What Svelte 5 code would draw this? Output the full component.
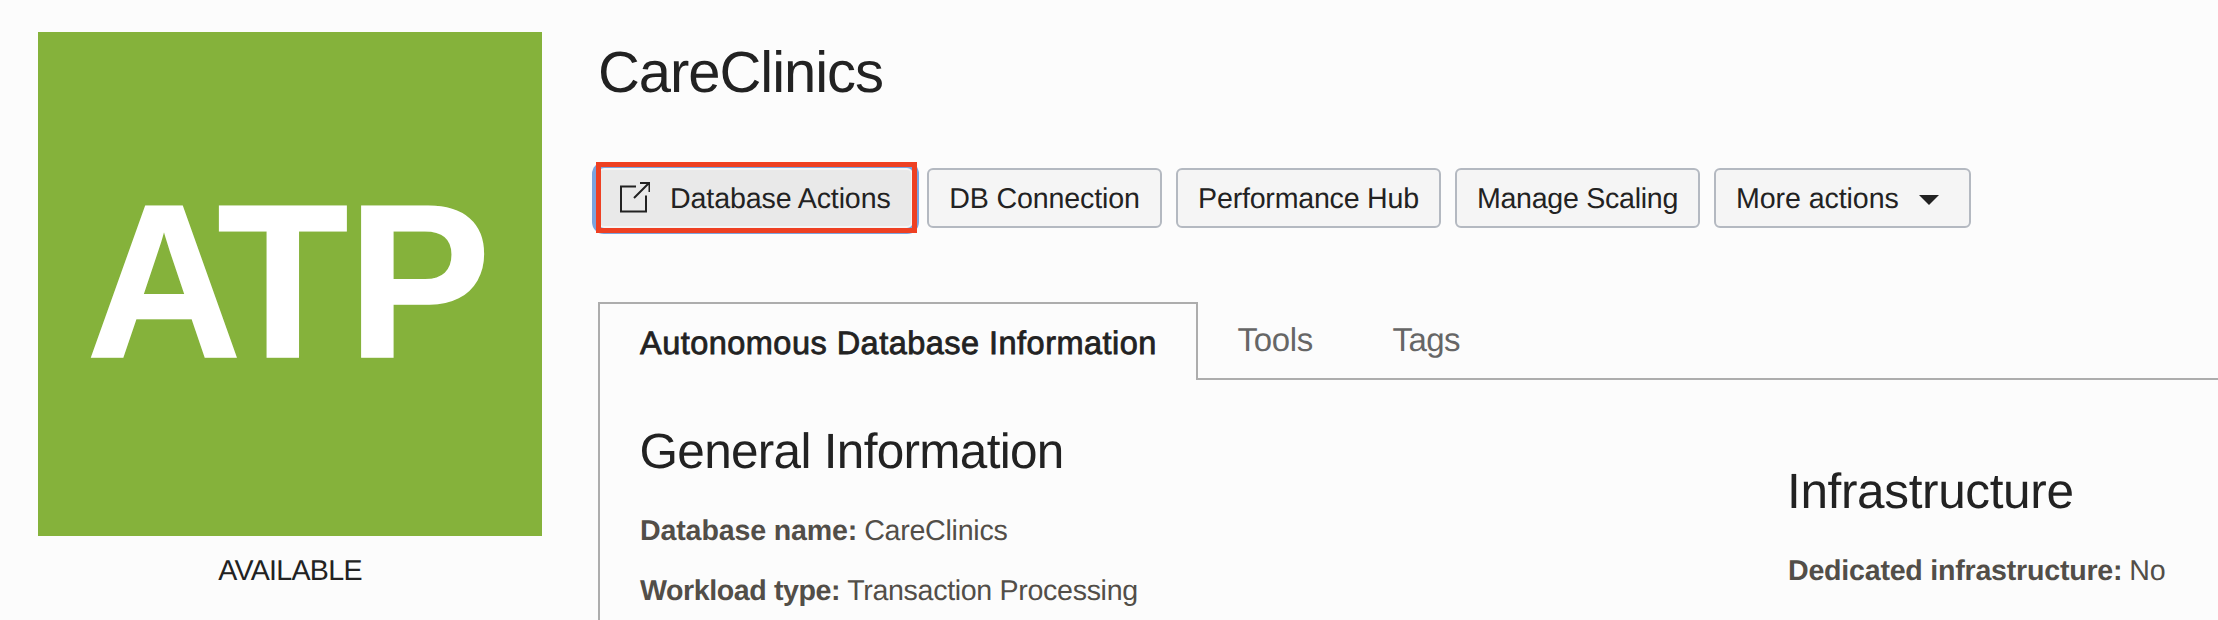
<script>
  const actions = [
    { label: 'DB Connection', width: 235, spacing: -0.15 },
    { label: 'Performance Hub', width: 265, spacing: -0.22 },
    { label: 'Manage Scaling', width: 245, spacing: -0.28 }
  ];
  const general = [
    { label: 'Database name:', value: 'CareClinics', ls: -0.15, vs: -0.27, gap: 7 },
    { label: 'Workload type:', value: 'Transaction Processing', ls: -0.42, vs: -0.32, gap: 7 }
  ];
</script>

<main>
  <aside>
    <div class="badge">
      <svg viewBox="0 0 504 504" width="504" height="504">
        <g transform="scale(.98 1)">
          <text y="325.3" x="49.5 182.8 315.8">ATP</text>
        </g>
      </svg>
    </div>
    <div class="state">AVAILABLE</div>
  </aside>
  <section class="detail">
    <h1>CareClinics</h1>
    <div class="actions">
      <button class="primary">
        <svg width="32" height="32" viewBox="0 0 32 32" fill="none" stroke="#222" stroke-width="2">
          <path d="M18 5.5H3V30.5H28V14.5M16 17L31 2M22 2H31.5V11" />
        </svg>
        <span>Database Actions</span>
      </button>
      {#each actions as a}
        <button style="width:{a.width}px;letter-spacing:{a.spacing}px">{a.label}</button>
      {/each}
      <button class="more">More actions
        <svg width="20" height="10" viewBox="0 0 20 10"><path d="M0 0H20L10 10Z" fill="#222" /></svg>
      </button>
    </div>
    <nav>
      <div class="tab active">Autonomous Database Information</div>
      <div class="rest">
        <div class="tab tools">Tools</div>
        <div class="tab tags">Tags</div>
      </div>
    </nav>
    <div class="panel">
      <div class="col">
        <h2>General Information</h2>
        {#each general as f}
          <p><b style="letter-spacing:{f.ls}px;margin-right:{f.gap}px">{f.label}</b><span style="letter-spacing:{f.vs}px">{f.value}</span></p>
        {/each}
      </div>
      <div class="col infra">
        <h2>Infrastructure</h2>
        <p><b>Dedicated infrastructure:</b><span>No</span></p>
      </div>
    </div>
  </section>
</main>

<style>
  :global(body) { margin: 0; background: #fcfcfc; overflow: hidden; }
  main {
    box-sizing: border-box;
    width: 2218px;
    height: 620px;
    overflow: hidden;
    display: flex;
    gap: 56px;
    padding-left: 38px;
    background: #fcfcfc;
    color: #222;
    font: 28.6px/40px "Liberation Sans", Arial, sans-serif;
    text-rendering: geometricPrecision;
  }
  aside { width: 504px; padding-top: 32px; flex: none; }
  .badge { height: 504px; background: #85b23b; }
  .badge svg { display: block; }
  .badge text { font-size: 219px; font-weight: 700; fill: #fff; stroke: #fff; stroke-width: 1.5px; }
  .state { margin-top: 15px; text-align: center; letter-spacing: -.7px; }
  .detail { flex: 1; min-width: 0; padding-top: 41px; display: flex; flex-direction: column; }
  h1 { margin: 0 0 63px; font-size: 58px; line-height: 64px; font-weight: 400; letter-spacing: -1.05px; }
  .actions { display: flex; gap: 14px; height: 60px; }
  button {
    box-sizing: border-box;
    height: 60px;
    padding: 2px 0 0;
    border: 2px solid #b4b9c1;
    border-radius: 6px;
    background: #f5f5f5;
    color: #222;
    font: inherit;
    display: flex;
    align-items: center;
    justify-content: center;
    white-space: nowrap;
    text-rendering: inherit;
  }
  .primary {
    position: relative;
    width: 315px;
    background: #e9e9e9;
    border-color: #f5f5f5;
    box-shadow: 0 0 0 6px #7ba4df;
    justify-content: flex-start;
    padding-left: 18px;
    gap: 20px;
    letter-spacing: -.12px;
  }
  .primary svg { margin-top: -5px; }
  .primary::after {
    content: "";
    position: absolute;
    inset: -8px -6px -7px -4px;
    border: 5px solid #ee4023;
  }
  .more { width: 257px; justify-content: flex-start; padding-left: 20px; gap: 20px; letter-spacing: -.08px; }
  .more svg { margin-top: 2px; }
  nav { display: flex; height: 78px; margin-top: 74px; }
  .tab { white-space: nowrap; }
  .active {
    box-sizing: border-box;
    width: 600px;
    border: 2px solid #adadad;
    border-bottom: 0;
    padding-left: 40px;
    font-size: 32.5px;
    line-height: 79px;
    letter-spacing: .47px;
    -webkit-text-stroke: .8px #222;
  }
  .rest {
    box-sizing: border-box;
    flex: 1;
    display: flex;
    border-bottom: 2px solid #adadad;
    padding-left: 39.5px;
    gap: 79.5px;
    font-size: 33px;
    line-height: 76px;
    color: #666;
  }
  .tools { letter-spacing: -.3px; }
  .tags { letter-spacing: -.6px; }
  .panel { flex: 1; display: flex; border-left: 2px solid #adadad; padding-left: 40px; }
  .col { width: 1148px; flex: none; padding-top: 42px; }
  .infra { width: 430px; padding-top: 82px; }
  h2 { margin: 0 0 29px -.5px; font-size: 49.5px; line-height: 60px; font-weight: 400; letter-spacing: -.7px; }
  .infra h2 { letter-spacing: -.36px; margin-left: -1px; }
  p { margin: 0 0 20px; color: #524e48; white-space: nowrap; }
  .infra p { letter-spacing: -.23px; }
  .infra b { margin-right: 7px; }
</style>
